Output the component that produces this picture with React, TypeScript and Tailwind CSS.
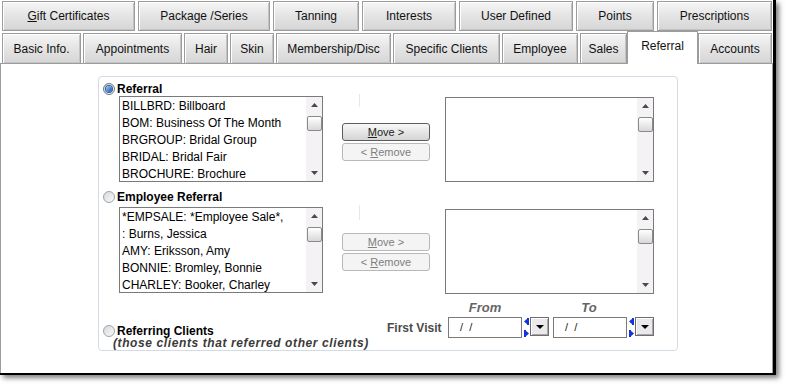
import React from 'react';

type TabDef = { label: React.ReactNode; w: string; active?: boolean };

const topTabs: TabDef[] = [
  { label: <><span className="underline">G</span>ift Certificates</>, w: 'w-[133px]' },
  { label: 'Package /Series', w: 'w-[132px]' },
  { label: 'Tanning', w: 'w-[86px]' },
  { label: 'Interests', w: 'w-[94px]' },
  { label: 'User Defined', w: 'w-[114px]' },
  { label: 'Points', w: 'w-[78px]' },
  { label: 'Prescriptions', w: 'w-[115px]' },
];

const bottomTabs: TabDef[] = [
  { label: 'Basic Info.', w: 'w-[79px]' },
  { label: 'Appointments', w: 'w-[99px]' },
  { label: 'Hair', w: 'w-[44px]' },
  { label: 'Skin', w: 'w-[44px]' },
  { label: 'Membership/Disc', w: 'w-[115px]' },
  { label: 'Specific Clients', w: 'w-[107px]' },
  { label: 'Employee', w: 'w-[76px]' },
  { label: 'Sales', w: 'w-[47px]' },
  { label: 'Referral', w: 'w-[71px]', active: true },
  { label: 'Accounts', w: 'w-[74px]' },
];

const referralItems = [
  'BILLBRD: Billboard',
  'BOM: Business Of The Month',
  'BRGROUP: Bridal Group',
  'BRIDAL: Bridal Fair',
  'BROCHURE: Brochure',
];

const employeeItems = [
  '*EMPSALE: *Employee Sale*,',
  ': Burns, Jessica',
  'AMY: Eriksson, Amy',
  'BONNIE: Bromley, Bonnie',
  'CHARLEY: Booker, Charley',
];

function Tab({ tab, bottom }: { tab: TabDef; bottom?: boolean }) {
  if (tab.active) {
    return (
      <div
        className={`${tab.w} relative z-10 -mx-[2px] -mb-[1px] flex h-[33px] items-center justify-center border border-b-0 border-[#9c9c9c] bg-white pb-[4px] text-[12px] text-[#111]`}
      >
        {tab.label}
      </div>
    );
  }
  return (
    <div
      className={`${tab.w} flex h-[30px] items-center justify-center border border-[#9c9c9c] bg-gradient-to-b from-[#f6f6f6] via-[#e4e4e4] to-[#d6d6d6] text-[12px] text-[#111] shadow-[inset_1px_1px_0_#ffffff,inset_-1px_-1px_0_#c4c4c4] ${bottom ? 'border-b-0' : ''}`}
    >
      {tab.label}
    </div>
  );
}

function Radio({ on }: { on?: boolean }) {
  if (on) {
    return (
      <span className="flex h-[12px] w-[12px] items-center justify-center rounded-full border border-[#66788a] bg-gradient-to-br from-[#d4d8dc] to-[#ffffff]">
        <span className="h-[6px] w-[6px] rounded-full bg-gradient-to-br from-[#9fd0ff] to-[#0d46b0] shadow-[0_0_0_1px_#3a5a8c]" />
      </span>
    );
  }
  return (
    <span className="h-[12px] w-[12px] rounded-full border border-[#9ba4ae] bg-gradient-to-br from-[#d8d8d8] to-[#fbfbfb]" />
  );
}

function ScrollBar() {
  return (
    <div className="flex w-[16px] flex-col items-center bg-[#f4f2f4]">
      <div className="flex h-[16px] items-center justify-center">
        <svg width="7" height="4" viewBox="0 0 7 4">
          <polygon points="3.5,0 7,4 0,4" fill="#4a4a4a" />
        </svg>
      </div>
      <div className="mt-[3px] h-[15px] w-[15px] rounded-[2px] border border-[#8a8a8a] bg-gradient-to-b from-[#ffffff] to-[#d8d8d8]" />
      <div className="flex-1" />
      <div className="flex h-[16px] items-center justify-center">
        <svg width="7" height="4" viewBox="0 0 7 4">
          <polygon points="0,0 7,0 3.5,4" fill="#4a4a4a" />
        </svg>
      </div>
    </div>
  );
}

function ListBox({ items, className }: { items: string[]; className: string }) {
  return (
    <div className={`flex border border-[#7a7a7a] bg-white ${className}`}>
      <div className="flex-1 overflow-hidden pl-[2px] pt-[1px]">
        {items.map((t) => (
          <div key={t} className="h-[17px] whitespace-nowrap text-[12px] leading-[17px] text-black">
            {t}
          </div>
        ))}
      </div>
      <ScrollBar />
    </div>
  );
}

function Btn({ enabled, children }: { enabled?: boolean; children: React.ReactNode }) {
  return enabled ? (
    <div className="flex h-[18px] w-[88px] items-center justify-center whitespace-pre rounded-[3px] border border-[#5c5c5c] bg-gradient-to-b from-[#f8f8f8] to-[#d4d4d4] text-[11px] text-[#222]">
      {children}
    </div>
  ) : (
    <div className="flex h-[18px] w-[88px] items-center justify-center whitespace-pre rounded-[3px] border border-[#b8b8b8] bg-[#f4f4f4] text-[11px] text-[#7e7e7e]">
      {children}
    </div>
  );
}

function DateField() {
  return (
    <div className="flex items-start">
      <div className="flex h-[21px] w-[74px] items-center whitespace-pre border border-[#7a7a7a] bg-white pl-[11px] text-[11px] text-[#222]">
        {'/  /'}
      </div>
      <svg className="ml-[2px] mt-[1px]" width="5" height="19" viewBox="0 0 5 19">
        <polygon points="4,0 4,7 0,3.5" fill="#1233e0" />
        <rect x="3" y="0" width="2" height="7" fill="#1233e0" />
        <polygon points="1,12 1,19 5,15.5" fill="#1233e0" />
        <rect x="0" y="12" width="2" height="7" fill="#1233e0" />
      </svg>
      <div className="ml-[1px] flex h-[19px] w-[19px] items-center justify-center border border-[#6e6e6e] bg-[#ece9ec] shadow-[inset_1px_1px_0_#ffffff,inset_-1px_-1px_0_#a8a8a8]">
        <svg width="8" height="4" viewBox="0 0 8 4">
          <polygon points="0,0 8,0 4,4" fill="#000" />
        </svg>
      </div>
    </div>
  );
}

export default function App() {
  return (
    <div className="h-[386px] w-[786px] bg-white font-['Liberation_Sans',Arial,sans-serif]">
      <div className="flex h-[375px] w-[776px] flex-col border-b-2 border-r-[3px] border-black bg-white shadow-[3px_3px_5px_rgba(0,0,0,0.5)]">
        {/* tab rows */}
        <div className="flex h-[31px] gap-[3px] pl-[2px] pt-[1px]">
          {topTabs.map((t, i) => (
            <Tab key={i} tab={t} />
          ))}
        </div>
        <div className="flex h-[32px] items-end gap-[2px] pl-[2px]">
          {bottomTabs.map((t, i) => (
            <Tab key={i} tab={t} bottom />
          ))}
        </div>

        {/* content */}
        <div className="flex-1 border-l border-r border-t border-[#9c9c9c] bg-white pl-[97px] pt-[12px]">
          <div className="h-[275px] w-[580px] rounded-[4px] border border-[#d3dbe4] pl-[4px] pt-[6px]">
            {/* Referral */}
            <div className="flex items-start">
              <div className="w-[220px]">
                <label className="flex h-[12px] items-center gap-[2px]">
                  <Radio on />
                  <span className="text-[12px] font-bold leading-[12px] text-black">Referral</span>
                </label>
                <ListBox items={referralItems} className="ml-[16px] mt-[1px] h-[86px] w-[204px]" />
              </div>
              <div className="ml-[19px] flex w-[88px] flex-col">
                <div className="ml-[17px] mt-[11px] h-[13px] w-[1px] bg-[#f2e2e8]" />
                <div className="mt-[16px]">
                  <Btn enabled>
                    <span className="underline">M</span>
                    {'ove >'}
                  </Btn>
                </div>
                <div className="mt-[2px]">
                  <Btn>
                    {'< '}
                    <span className="underline">R</span>
                    {'emove'}
                  </Btn>
                </div>
              </div>
              <ListBox items={[]} className="ml-[15px] mt-[14px] h-[85px] w-[209px]" />
            </div>

            {/* Employee Referral */}
            <div className="mt-[9px] flex items-start">
              <div className="w-[220px]">
                <label className="flex h-[12px] items-center gap-[2px]">
                  <Radio />
                  <span className="text-[12px] font-bold leading-[12px] text-black">Employee Referral</span>
                </label>
                <ListBox items={employeeItems} className="ml-[16px] mt-[4px] h-[86px] w-[204px]" />
              </div>
              <div className="ml-[19px] flex w-[88px] flex-col">
                <div className="ml-[17px] mt-[14px] h-[15px] w-[1px] bg-[#f2e2e8]" />
                <div className="mt-[13px]">
                  <Btn>
                    <span className="underline">M</span>
                    {'ove >'}
                  </Btn>
                </div>
                <div className="mt-[2px]">
                  <Btn>
                    {'< '}
                    <span className="underline">R</span>
                    {'emove'}
                  </Btn>
                </div>
              </div>
              <ListBox items={[]} className="ml-[15px] mt-[18px] h-[85px] w-[209px]" />
            </div>

            {/* Referring Clients */}
            <div className="mt-[7px] flex items-start">
              <div className="mt-[23px] w-[284px]">
                <label className="flex h-[13px] items-center gap-[2px]">
                  <Radio />
                  <span className="text-[12px] font-bold leading-[12px] text-black">Referring Clients</span>
                </label>
                <div className="ml-[10px] whitespace-nowrap text-[12px] font-bold italic leading-[12px] tracking-[0.6px] text-[#3a3a3a]">
                  (those clients that referred other clients)
                </div>
              </div>
              <div className="flex flex-col">
                <div className="flex h-[14px] items-center text-[13px] font-bold italic text-[#666]">
                  <div className="w-[61px]" />
                  <div className="w-[74px] text-center">From</div>
                  <div className="w-[30px]" />
                  <div className="w-[74px] text-center">To</div>
                </div>
                <div className="mt-[2px] flex items-center">
                  <span className="w-[61px] whitespace-nowrap text-[12px] font-bold text-[#4a4a4a]">First Visit</span>
                  <DateField />
                  <div className="ml-[4px]">
                    <DateField />
                  </div>
                </div>
              </div>
            </div>
          </div>
        </div>
      </div>
    </div>
  );
}
